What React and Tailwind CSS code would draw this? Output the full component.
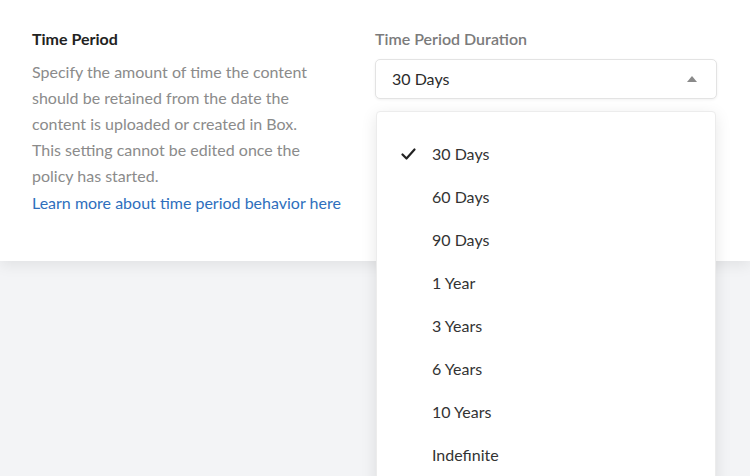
import React from 'react';

const options = ['30 Days', '60 Days', '90 Days', '1 Year', '3 Years', '6 Years', '10 Years', 'Indefinite'];

// check mark shown next to the selected option
const Check = () => (
  <svg width="15" height="12" viewBox="0 0 15 12" className="text-[#222]">
    <polyline points="1.5,6.5 5.5,10.5 13.5,1.5" fill="none" stroke="currentColor" strokeWidth="2.2" strokeLinecap="round" strokeLinejoin="round" />
  </svg>
);

const App = () => {
  const selected = '30 Days';

  return (
    <div className="w-full h-[476px] bg-[#f3f4f6] overflow-hidden font-['Lato','Liberation_Sans',sans-serif]">
      <div className="bg-white h-[261px] shadow-[0_4px_14px_rgba(0,0,0,0.08)] flex px-8 pt-[29px]">
        {/* Left: description */}
        <div className="w-[343px]">
          <h3 className="text-[16px] leading-5 font-bold text-[#222]">Time Period</h3>
          <p className="mt-[10px] text-[16px] leading-[26px] text-[#8b8b8b] w-[288px]">
            Specify the amount of time the content should be retained from the date the content is uploaded or created in Box. This setting cannot be edited once the policy has started.
          </p>
          <a className="block mt-px text-[16px] leading-[26px] text-[#2e6fbd]">Learn more about time period behavior here</a>
        </div>

        {/* Right: select */}
        <div className="w-[342px] relative">
          <label className="block text-[16px] leading-5 font-semibold text-[#7b7b7b]">Time Period Duration</label>
          <div className="mt-[10px] h-10 border border-[#e3e3e3] rounded-[5px] bg-white shadow-[0_1px_3px_rgba(0,0,0,0.06)] flex items-center justify-between pl-4 pr-[19px]">
            <span className="text-[16px] text-[#2b2b2b]">{selected}</span>
            <svg width="10" height="6" viewBox="0 0 10 6">
              <polygon points="5,0 10,6 0,6" fill="#8a8a8a" />
            </svg>
          </div>

          {/* Open menu */}
          <div className="absolute left-px right-px top-[82px] bg-white border border-[#ececec] rounded-[4px] shadow-[0_4px_16px_rgba(0,0,0,0.1)] pt-[20px] pb-2 z-10">
            {options.map((opt) => (
              <div key={opt} className="h-[43px] flex items-center pl-[24px]">
                <span className="w-[31px] flex items-center">{opt === selected && <Check />}</span>
                <span className="text-[16px] text-[#333]">{opt}</span>
              </div>
            ))}
          </div>
        </div>
      </div>
    </div>
  );
};

export default App;
